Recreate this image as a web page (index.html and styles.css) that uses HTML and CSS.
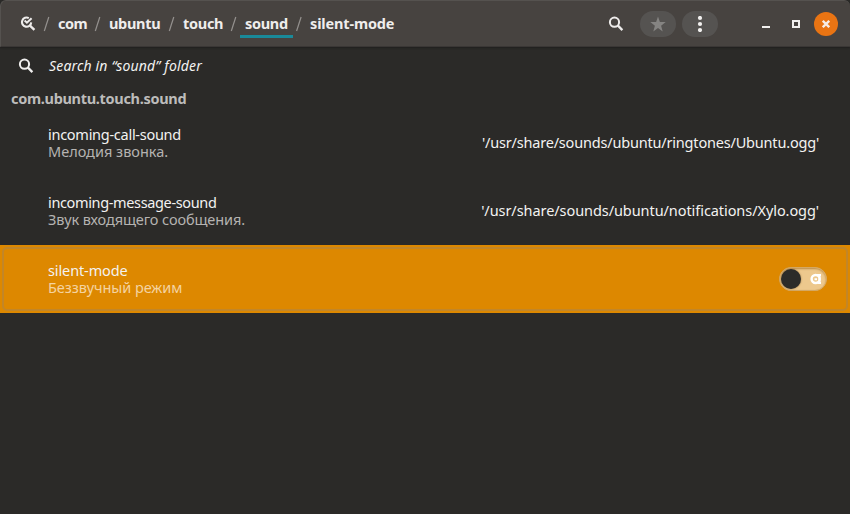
FILE: index.html
```
<!DOCTYPE html>
<html lang="ru">
<head>
<meta charset="utf-8">
<title>dconf</title>
<link rel="stylesheet" href="styles.css">
</head>
<body>
<div class="window">
  <header class="bar">
    <svg class="path-icon" width="16" height="16" viewBox="0 0 16 16"><path d="M8.8 2.1A4.6 4.6 0 1 0 11.2 6.4" fill="none" stroke="#eeeceb" stroke-width="2.1"/><path d="M9.7 9.4L14.4 13.8" stroke="#eeeceb" stroke-width="2.4"/><path d="M4.6 4.6L6.9 6.7L11.6 2.2" fill="none" stroke="#eeeceb" stroke-width="2"/></svg>
    <nav class="crumbs">
      <svg class="slash" width="13" height="16" viewBox="0 0 13 16"><path d="M4.3 15L8.8 1"/></svg><span class="crumb com">com</span>
      <svg class="slash" width="13" height="16" viewBox="0 0 13 16"><path d="M4.3 15L8.8 1"/></svg><span class="crumb ubuntu">ubuntu</span>
      <svg class="slash" width="13" height="16" viewBox="0 0 13 16"><path d="M4.3 15L8.8 1"/></svg><span class="crumb touch">touch</span>
      <svg class="slash" width="13" height="16" viewBox="0 0 13 16"><path d="M4.3 15L8.8 1"/></svg><span class="crumb current">sound</span>
      <svg class="slash last" width="12" height="16" viewBox="0 0 12 16"><path d="M3.6 15L8.1 1"/></svg><span class="crumb leaf">silent-mode</span>
    </nav>
    <svg class="find" width="16" height="16" viewBox="0 0 16 16"><circle cx="6.5" cy="6.2" r="4.6" fill="none" stroke="#eeeceb" stroke-width="2"/><path d="M9.7 9.4L14.4 14.1" stroke="#eeeceb" stroke-width="2.3"/></svg>
    <button class="pill"><svg width="16" height="16" viewBox="0 0 16 16"><path d="M8 0.5L9.9 6H15.7L11.1 9.7L12.7 15.4L8 12L3.3 15.4L4.9 9.7L.3 6H6.1Z" fill="#858482"/></svg></button>
    <button class="pill menu"><svg width="16" height="16" viewBox="0 0 16 16"><g fill="#f1f0ef"><circle cx="8" cy="2" r="2.1"/><circle cx="8" cy="8" r="2.1"/><circle cx="8" cy="14" r="2.1"/></g></svg></button>
    <div class="controls">
      <i class="minimize"></i><i class="maximize"></i>
      <button class="close"><svg width="8" height="8" viewBox="0 0 8 8"><path d="M.8 .8L7.2 7.2M7.2 .8L.8 7.2" stroke="#f6ede6" stroke-width="2.3"/></svg></button>
    </div>
  </header>
  <main>
    <div class="search">
      <svg width="16" height="16" viewBox="0 0 16 16"><circle cx="6.5" cy="6.2" r="4.6" fill="none" stroke="#f0efee" stroke-width="2"/><path d="M9.7 9.4L14.4 14.1" stroke="#f0efee" stroke-width="2.3"/></svg>
      <span class="hint">Search in “sound” folder</span>
    </div>
    <h2>com.ubuntu.touch.sound</h2>
    <section class="row">
      <div class="text"><div class="key k1">incoming-call-sound</div><div class="desc d1">Мелодия звонка.</div></div>
      <div class="value v1">'/usr/share/sounds/ubuntu/ringtones/Ubuntu.ogg'</div>
    </section>
    <section class="row">
      <div class="text"><div class="key k2">incoming-message-sound</div><div class="desc d2">Звук входящего сообщения.</div></div>
      <div class="value v2">'/usr/share/sounds/ubuntu/notifications/Xylo.ogg'</div>
    </section>
    <section class="selected">
      <div class="focus">
        <div class="text"><div class="key k3">silent-mode</div><div class="desc d3">Беззвучный режим</div></div>
        <div class="switch"><i class="knob"></i><svg width="12" height="12" viewBox="0 0 12 12"><circle cx="5.6" cy="6" r="4" fill="none" stroke="#fff" stroke-width="2.4"/><path d="M5.5 2H11M9.6 1.5V10.5M4.5 6.2H7M8 10H11" stroke="#fff" stroke-width="2"/></svg></div>
      </div>
    </section>
  </main>
</div>
</body>
</html>
```
FILE: styles.css
```
* { box-sizing: border-box; }
body { margin: 0; background: #2b2a28; font: 14.5px/17px "Noto Sans", "Open Sans", sans-serif; color: #f3f2f1; }
.window { width: 850px; height: 514px; overflow: hidden; background: #2b2a28; }
button { border: 0; padding: 0; display: flex; align-items: center; justify-content: center; }
svg { display: block; flex: none; }
.bar { display: flex; align-items: center; height: 47px; padding: 1px 12px 0 19px; background: #474340; border: 1px solid #55524f; border-width: 1px 0 1px 1px; border-bottom-color: #3a3735; border-radius: 6px 6px 0 0; box-shadow: 0 1px 2px #201f1e; }
.crumbs { display: flex; align-items: center; height: 100%; flex: 1; margin-left: 4px; font-weight: 700; }
.crumb { height: 28px; line-height: 27px; white-space: nowrap; padding: 0 5px; color: #efedec; }
.slash { fill: none; stroke: #94918e; stroke-width: 1.2; }
.com { width: 38px; letter-spacing: -.5px; }
.ubuntu { width: 61px; letter-spacing: -.3px; }
.touch { width: 49px; letter-spacing: -.3px; }
.current { width: 53px; letter-spacing: -.3px; border-bottom: 3px solid #1a8a99; border-radius: 2px 2px 0 0; }
.leaf { width: 94px; letter-spacing: -.15px; }
.pill { width: 36px; height: 26px; border-radius: 13px; background: #555351; margin-left: 16px; }
.menu { margin-left: 6px; }
.controls { display: flex; align-items: center; margin-left: 44px; }
.minimize { width: 8px; height: 2px; background: #f1efee; margin-top: 5px; }
.maximize { width: 8px; height: 8px; border: 2px solid #f1efee; margin-left: 22px; }
.close { width: 24px; height: 24px; border-radius: 50%; background: #e97413; margin-left: 14px; }
.search { display: flex; align-items: center; height: 38px; padding-left: 18px; }
.hint { margin: -2px 0 0 15px; font-style: italic; font-size: 14px; letter-spacing: .17px; white-space: nowrap; }
h2 { margin: 0; height: 24px; padding: 5px 0 0 11px; font-size: 14.5px; line-height: 17px; letter-spacing: -.31px; color: #bdbcbb; }
.row, .focus { display: flex; align-items: center; justify-content: space-between; white-space: nowrap; }
.row { height: 68px; padding: 0 31px 0 48px; }
.desc { color: #b5b3b1; }
.value { margin-top: -2px; }
.k1 { letter-spacing: -.27px; }
.k2 { letter-spacing: -.36px; }
.k3 { letter-spacing: -.12px; }
.d2 { letter-spacing: -.1px; }
.d3 { letter-spacing: -.07px; }
.v1 { letter-spacing: -.19px; }
.v2 { letter-spacing: -.07px; }
.selected { height: 68px; padding: 2px; background: #dd8800; }
.focus { height: 64px; padding: 0 19px 0 44px; border: 2px solid #c28628; border-radius: 5px; }
.selected .desc { color: #f4d3a0; }
.switch { display: flex; align-items: center; justify-content: space-between; width: 48px; height: 24px; border: 1px solid #d4a864; border-radius: 12px; background: #edc88d; box-shadow: inset 0 1px 2px #b98a45; padding: 0 4px 0 1px; }
.knob { width: 20px; height: 20px; border-radius: 50%; background: #2c2b29; box-shadow: 0 0 2px #8b6c3d; }
```
